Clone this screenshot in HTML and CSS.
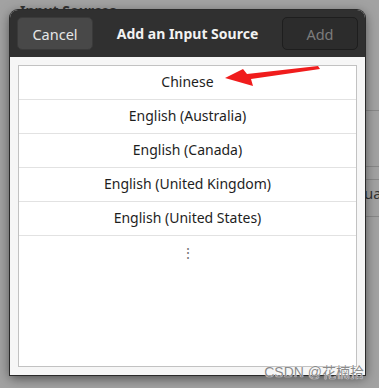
FILE: index.html
```html
<!DOCTYPE html>
<html lang="en">
<head>
<meta charset="UTF-8" />
<title>Add an Input Source</title>
<link rel="stylesheet" href="styles.css">
</head>
<body>

<div class="backdrop">
  <span class="bg-title">Input Sources</span>
  <span class="bg-side">ua</span>
  <span class="bg-line l1"></span>
  <span class="bg-line l2"></span>
  <span class="bg-line l3"></span>
  <span class="bg-line l4"></span>
</div>

<div class="dialog">
  <div class="header">
    <button class="btn cancel">Cancel</button>
    <h1>Add an Input Source</h1>
    <button class="btn add" disabled>Add</button>
  </div>
  <div class="content">
    <ul class="list">
      <li>Chinese</li>
      <li>English (Australia)</li>
      <li>English (Canada)</li>
      <li>English (United Kingdom)</li>
      <li>English (United States)</li>
      <li class="more">&#8942;</li>
    </ul>
  </div>
</div>

<!-- red annotation arrow -->
<svg class="arrow" width="110" height="30" viewBox="0 0 110 30">
  <polygon points="95,1 97,4 28,14 30,21 2,13 20,4 24,9" fill="#f01c1c" />
</svg>

<div class="watermark">CSDN @花楠拾</div>

</body>
</html>
```

FILE: styles.css
```css
html, body {
  margin: 0;
  height: 100%;
}
body {
  background-color: #a2a2a2;
  font-family: 'Noto Sans', 'Open Sans', sans-serif;
  position: relative;
  overflow: hidden;
  padding: 10px 14px 0 10px;
  box-sizing: border-box;
}
.backdrop {
  position: absolute;
  inset: 0;
}
.bg-title {
  position: absolute;
  left: 20px;
  top: 1px;
  font-weight: bold;
  font-size: 14px;
  color: #333;
}
.bg-side {
  position: absolute;
  left: 364px;
  top: 183px;
  font-size: 15px;
  color: #333;
}
.bg-line {
  position: absolute;
  left: 364px;
  right: 0;
  height: 1px;
  background: #888;
}
.l1 { top: 110px; }
.l2 { top: 166px; }
.l3 { top: 179px; }
.l4 { top: 216px; }

.dialog {
  position: relative;
  width: 355px;
  height: 365px;
  border-radius: 8px 8px 0 0;
  background: #f6f6f6;
  box-shadow: 0 0 0 1px #2a2a2a, 0 3px 12px rgba(0, 0, 0, 0.55);
  display: flex;
  flex-direction: column;
  overflow: hidden;
}
.header {
  height: 47px;
  background: #303030;
  display: flex;
  align-items: center;
  justify-content: space-between;
  padding: 0 7px;
  flex-shrink: 0;
}
.header h1 {
  margin: 0;
  font-size: 14px;
  font-weight: bold;
  color: #f2f2f2;
}
.btn {
  width: 76px;
  height: 33px;
  border-radius: 5px;
  font-family: inherit;
  font-size: 14.5px;
  border: 1px solid #262626;
}
.cancel {
  background: #484848;
  color: #e6e6e6;
  border-color: #3a3a3a;
}
.add {
  background: #2c2c2c;
  color: #7c7c7c;
  border-color: #1e1e1e;
}
.content {
  flex: 1;
  padding: 8px;
  display: flex;
}
.list {
  flex: 1;
  margin: 0;
  padding: 0;
  list-style: none;
  background: #fff;
  border: 1px solid #c2c2c2;
}
.list li {
  height: 33px;
  border-bottom: 1px solid #e2e2e2;
  display: flex;
  align-items: center;
  justify-content: center;
  font-size: 14px;
  color: #1e1e1e;
  padding-bottom: 2px;
  box-sizing: border-box;
  height: 34px;
}
.list li.more {
  border-bottom: none;
  color: #777;
}
.arrow {
  position: absolute;
  left: 223px;
  top: 65px;
}
.watermark {
  position: absolute;
  right: 15px;
  bottom: 7px;
  font-family: 'Liberation Sans', 'Noto Sans CJK SC', sans-serif;
  font-size: 14px;
  color: #8a8a8a;
  text-shadow: 0 0 1px #fff, 0 0 1px #fff;
}
```
